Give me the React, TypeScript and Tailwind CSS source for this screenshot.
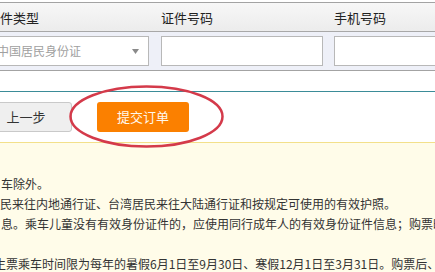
import React from "react";

const font = { fontFamily: '"Noto Sans CJK SC", "Noto Sans", sans-serif' };

export default function App() {
  return (
    <div
      className="relative w-[435px] h-[272px] overflow-hidden bg-white text-[#333]"
      style={font}
    >
      <div className="pt-[2px]">
        <div className="border-t border-[#a3a3a3]" />
        <div className="h-[28px] bg-gradient-to-b from-[#f7f7f7] to-[#ececec] flex ml-[-13px] items-center">
          <div className="w-[174px] shrink-0 text-[13px] text-[#222] leading-none">证件类型</div>
          <div className="w-[173px] shrink-0 text-[13px] text-[#222] leading-none">证件号码</div>
          <div className="w-[173px] shrink-0 text-[13px] text-[#222] leading-none">手机号码</div>
        </div>
        <div className="border-t border-[#a8a8a8]" />
        <div className="h-[38px] bg-[#eef0f8] flex ml-[-13px] pt-[4px]">
          <div className="w-[174px] shrink-0">
            <div className="w-[162px] h-[30px] bg-white border border-[#b8b8b8] flex items-center pl-[9px] pr-[9px] justify-between">
              <span className="text-[12px] text-[#a0a0a0] leading-none">中国居民身份证</span>
              <svg width="7" height="5" viewBox="0 0 7 5">
                <path d="M0 0 L7 0 L3.5 5 Z" fill="#8a8a8a" />
              </svg>
            </div>
          </div>
          <div className="w-[173px] shrink-0">
            <div className="w-[162px] h-[30px] bg-white border border-[#b8b8b8]" />
          </div>
          <div className="w-[173px] shrink-0">
            <div className="w-[162px] h-[30px] bg-white border border-[#b8b8b8]" />
          </div>
        </div>
        <div className="border-t border-[#a3a3a3]" />
      </div>

      <div className="mt-[20px] border-t border-[#3b8c98]" />

      <div className="mt-[10px] flex ml-[-20px] gap-[25px]">
        <div className="w-[92px] shrink-0 h-[30px] bg-[#efefef] border border-[#c9c9c9] rounded-[3px] flex items-center justify-center text-[13px] text-[#333]">
          上一步
        </div>
        <div className="w-[92px] shrink-0 h-[30px] bg-[#fb8000] rounded-[3px] flex items-center justify-center text-[13px] text-[#fff8ec]">
          提交订单
        </div>
      </div>

      <div className="mt-[10px] border-t border-[#f3e08a] bg-[#fffce9] h-[200px] pt-[31px] text-[12px] leading-[20px] text-[#333]">
        <div className="whitespace-nowrap ml-[1px]">车除外。</div>
        <div className="whitespace-nowrap">民来往内地通行证、台湾居民来往大陆通行证和按规定可使用的有效护照。</div>
        <div className="whitespace-nowrap ml-[1px]">息。乘车儿童没有有效身份证件的，应使用同行成年人的有效身份证件信息；购票时</div>
        <div className="h-[20px]" />
        <div className="whitespace-nowrap ml-[-6px]">生票乘车时间限为每年的暑假6月1日至9月30日、寒假12月1日至3月31日。购票后、</div>
      </div>

      <svg
        className="absolute left-0 top-0 pointer-events-none"
        width="435"
        height="272"
        viewBox="0 0 435 272"
      >
        <ellipse
          cx="146.5"
          cy="116.5"
          rx="76"
          ry="30"
          fill="none"
          stroke="#d43a4a"
          strokeWidth="2.5"
        />
      </svg>
    </div>
  );
}
